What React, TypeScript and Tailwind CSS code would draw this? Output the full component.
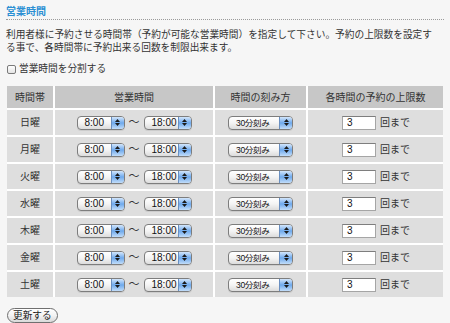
import React from 'react';

const days = ['日曜', '月曜', '火曜', '水曜', '木曜', '金曜', '土曜'];

const font = "font-['Liberation_Sans','Noto_Sans_CJK_JP',sans-serif]";

// Aqua style popup select
const AquaSelect = ({ value, width, small = false }: { value: string; width: string; small?: boolean }) => (
  <div
    className={`${width} h-[14px] flex items-stretch rounded-[4px] border border-[#7d7d7d] bg-gradient-to-b from-white via-[#f4f4f4] to-[#dcdcdc] overflow-hidden shadow-[0_1px_0_rgba(0,0,0,0.08)]`}
  >
    <span className={`flex-1 pl-[7px] ${small ? 'text-[8.5px] tracking-[-0.3px]' : 'text-[10px]'} leading-[12px] text-[#111]`}>
      {value}
    </span>
    <span className="w-[13px] flex flex-col items-center justify-center gap-[1px] border-l border-[#6a8fc0] bg-gradient-to-b from-[#d3e6fb] via-[#6ea9ec] to-[#c2ddf9]">
      <svg width="5" height="3" viewBox="0 0 5 3"><path d="M0 3 L2.5 0 L5 3 Z" fill="#1a1a1a" /></svg>
      <svg width="5" height="3" viewBox="0 0 5 3"><path d="M0 0 L2.5 3 L5 0 Z" fill="#1a1a1a" /></svg>
    </span>
  </div>
);

const Cell = ({ children, head = false }: { children: React.ReactNode; head?: boolean }) => (
  <div
    className={`flex items-center justify-center text-[10px] text-[#333] ${
      head ? 'bg-[#c7c7c7] h-[22px]' : 'bg-[#dedede] h-[25px]'
    }`}
  >
    {children}
  </div>
);

export default function App() {
  return (
    <div className={`w-[450px] h-[323px] bg-[#f6f6f6] px-[6px] pt-[5px] ${font} text-[#333] overflow-hidden`}>
      {/* Title */}
      <div className="text-[10px] leading-[13px] font-bold text-[#2b8fd3] pb-[1px] border-b border-dotted border-[#9a9a9a]">
        営業時間
      </div>

      {/* Description */}
      <p className="mt-[9px] text-[9.7px] leading-[12.5px] whitespace-nowrap">
        利用者様に予約させる時間帯（予約が可能な営業時間）を指定して下さい。予約の上限数を設定す
        <br />
        る事で、各時間帯に予約出来る回数を制限出来ます。
      </p>

      {/* Checkbox */}
      <label className="mt-[9px] flex items-center gap-[3px] text-[9.7px] leading-[12px] pl-[1px]">
        <span className="w-[9px] h-[9px] rounded-[2px] border border-[#7a7a7a] bg-gradient-to-b from-white to-[#e4e4e4]" />
        営業時間を分割する
      </label>

      {/* Table */}
      <div className="mt-[11px] ml-[1px] w-[436px] grid grid-cols-[46px_158px_91px_135px] gap-[2px] bg-white">
        <Cell head>時間帯</Cell>
        <Cell head>営業時間</Cell>
        <Cell head>時間の刻み方</Cell>
        <Cell head>各時間の予約の上限数</Cell>
        {days.map((d) => (
          <React.Fragment key={d}>
            <Cell>{d}</Cell>
            <Cell>
              <div className="flex items-center gap-[3px]">
                <AquaSelect value="8:00" width="w-[48px]" />
                <span className="text-[11px] w-[13px] text-center">〜</span>
                <AquaSelect value="18:00" width="w-[48px]" />
              </div>
            </Cell>
            <Cell>
              <AquaSelect value="30分刻み" width="w-[65px]" small />
            </Cell>
            <Cell>
              <div className="flex items-center gap-[4px] pl-[1px]">
                <div className="w-[34px] h-[14px] bg-white border border-[#a5a5a5] border-t-[#7e7e7e] pl-[4px] text-[10px] leading-[12px] text-[#111]">
                  3
                </div>
                <span className="text-[10px]">回まで</span>
              </div>
            </Cell>
          </React.Fragment>
        ))}
      </div>

      {/* Submit */}
      <button className="mt-[11px] ml-[1px] h-[15px] px-[5px] rounded-full border border-[#6f6f6f] bg-gradient-to-b from-white via-[#f3f3f3] to-[#d9d9d9] text-[9.7px] leading-[12px] text-[#222] flex items-center">
        更新する
      </button>
    </div>
  );
}
